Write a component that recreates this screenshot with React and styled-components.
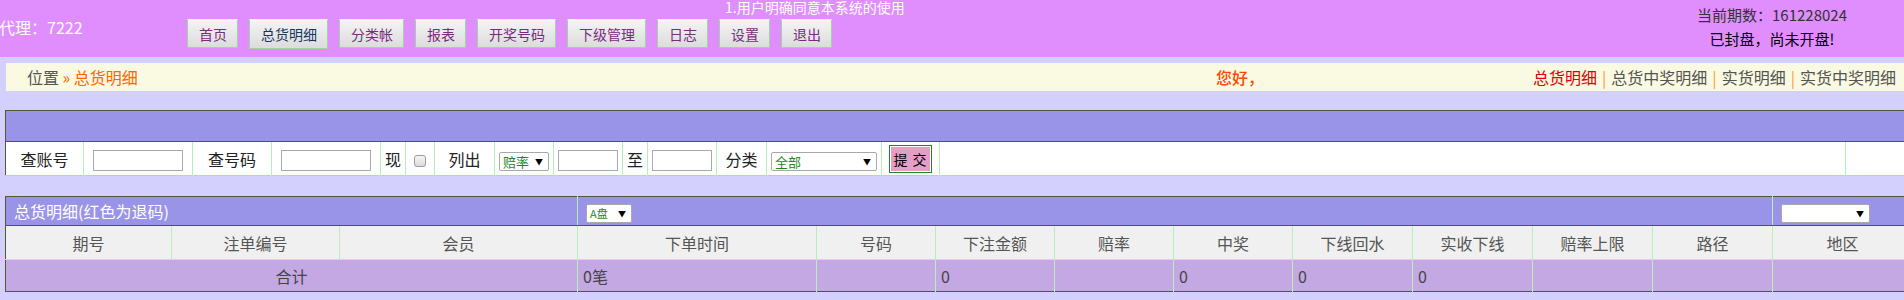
import React from 'react'
import styled, { createGlobalStyle } from 'styled-components'

const GlobalStyle = createGlobalStyle`
  body {
    margin: 0;
    background: #d4d0fe;
    font-family: "Noto Sans CJK SC", "Noto Sans", sans-serif;
    overflow: hidden;
  }
`

const navItems = ['首页', '总货明细', '分类帐', '报表', '开奖号码', '下级管理', '日志', '设置', '退出']
const tabs = ['总货明细', '总货中奖明细', '实货明细', '实货中奖明细']
const columns = [
  { title: '期号', w: 166 },
  { title: '注单编号', w: 168 },
  { title: '会员', w: 238 },
  { title: '下单时间', w: 239 },
  { title: '号码', w: 119 },
  { title: '下注金额', w: 119 },
  { title: '赔率', w: 119 },
  { title: '中奖', w: 119 },
  { title: '下线回水', w: 120 },
  { title: '实收下线', w: 120 },
  { title: '赔率上限', w: 120 },
  { title: '路径', w: 120 },
  { title: '地区', w: 140 },
]
const filterCols = [78, 109, 79, 109, 25, 29, 60, 59, 69, 25, 69, 50, 115, 58, 906, 67]
const sum = (list) => list.reduce((a, b) => a + b, 0)

const App = () => {
  return (
    <>
      <GlobalStyle />
      <Header>
        <Agent>代理：7222</Agent>
        <Middle>
          <Marquee>1.用户明确同意本系统的使用</Marquee>
          <Nav>
            {navItems.map((item) => (
              <NavButton key={item} $active={item === '总货明细'}>{item}</NavButton>
            ))}
          </Nav>
        </Middle>
        <Status>
          <div>当前期数：161228024</div>
          <div className="closed">已封盘，尚未开盘!</div>
        </Status>
      </Header>

      <Page>
        <Crumbs>
          <div>
            <span>位置</span> <Orange>» 总货明细</Orange>
          </div>
          <Greeting>您好，</Greeting>
          <Tabs>
            {tabs.map((t, i) => (
              <React.Fragment key={t}>
                {i > 0 && <Sep>|</Sep>}
                <Tab $active={i === 0}>{t}</Tab>
              </React.Fragment>
            ))}
          </Tabs>
        </Crumbs>

        <FilterTable $w={sum(filterCols)}>
          <colgroup>
            {filterCols.map((w, i) => <col key={i} style={{ width: w }} />)}
          </colgroup>
          <tbody>
            <tr>
              <BarCell colSpan={16} />
            </tr>
            <FilterRow>
              <td>查账号</td>
              <td><TextBox $w={90} /></td>
              <td>查号码</td>
              <td><TextBox $w={90} /></td>
              <td>现</td>
              <td><Check type="checkbox" /></td>
              <td>列出</td>
              <td><SelectBox $w={50}>赔率<Arrow>▼</Arrow></SelectBox></td>
              <td><TextBox $w={60} /></td>
              <td>至</td>
              <td><TextBox $w={60} /></td>
              <td>分类</td>
              <td><SelectBox $w={106}>全部<Arrow>▼</Arrow></SelectBox></td>
              <td><Submit>提 交</Submit></td>
              <td />
              <td />
            </FilterRow>
          </tbody>
        </FilterTable>

        <ListTable $w={sum(columns.map((c) => c.w))}>
          <colgroup>
            {columns.map((c) => <col key={c.title} style={{ width: c.w }} />)}
          </colgroup>
          <tbody>
            <TitleRow>
              <td colSpan={3}>总货明细(红色为退码)</td>
              <td colSpan={9}><SelectBox $w={46} $small>A盘<Arrow>▼</Arrow></SelectBox></td>
              <td><SelectBox $w={89}><span /><Arrow>▼</Arrow></SelectBox></td>
            </TitleRow>
            <HeadRow>
              {columns.map((c) => <th key={c.title}>{c.title}</th>)}
            </HeadRow>
            <SumRow>
              <SumLabel colSpan={3}>合计</SumLabel>
              <td>0笔</td>
              <td />
              <td>0</td>
              <td />
              <td>0</td>
              <td>0</td>
              <td>0</td>
              <td />
              <td />
              <td />
            </SumRow>
          </tbody>
        </ListTable>
      </Page>
    </>
  )
}

const Header = styled.header`
  display: flex;
  height: 57px;
  background: #e08efe;
`
const Agent = styled.div`
  width: 188px;
  flex-shrink: 0;
  margin-left: -1px;
  padding-top: 15px;
  color: #fff;
  font-size: 16px;
  white-space: nowrap;
`
const Middle = styled.div`
  display: flex;
  flex-direction: column;
`
const Marquee = styled.div`
  height: 16px;
  padding-left: 538px;
  white-space: nowrap;
  color: #fff;
  font-size: 14px;
  line-height: 14px;
`
const Nav = styled.nav`
  display: flex;
  align-items: flex-start;
  gap: 11px;
  margin-top: 3px;
`
const NavButton = styled.button`
  height: ${(p) => (p.$active ? 30 : 29)}px;
  padding: 0 10px 0 11px;
  border: 1px solid #9fd49f;
  border-top-color: #e8f4e8;
  background: linear-gradient(#f4f4f4, #dcdcdc);
  color: ${(p) => (p.$active ? '#14365e' : '#7a2b7e')};
  font-family: inherit;
  font-size: 14px;
  cursor: pointer;
`
const Status = styled.div`
  margin-left: auto;
  width: 200px;
  margin-right: 32px;
  padding-top: 3px;
  text-align: center;
  color: #333;
  font-size: 15px;
  line-height: 24px;

  .closed {
    color: #000;
  }
`

const Page = styled.div`
  padding-left: 5px;
`
const Crumbs = styled.div`
  display: grid;
  grid-template-columns: 920px 1fr auto;
  align-items: center;
  height: 28px;
  margin-top: 6px;
  margin-left: 1px;
  padding: 0 8px 0 21px;
  background: #fafae2;
  color: #555;
  font-size: 16px;
`
const Orange = styled.span`
  color: #ff6600;
`
const Greeting = styled.div`
  text-align: center;
  color: #ff4800;
  font-weight: 500;
`
const Tabs = styled.div`
  display: flex;
  gap: 5px;
`
const Tab = styled.span`
  color: ${(p) => (p.$active ? '#dd0000' : '#555')};
`
const Sep = styled.span`
  color: #ff9a40;
`

const FilterTable = styled.table`
  margin-top: 19px;
  width: ${(p) => p.$w}px;
  table-layout: fixed;
  border-collapse: collapse;
  border-top: 1px solid #4f5a35;
  border-left: 1px solid #4f5a35;
  border-bottom: 1px solid #9de49d;
`
const BarCell = styled.td`
  height: 30px;
  padding: 0;
  background: #9a94e8;
  border-bottom: 1px solid #4f5a35;
`
const FilterRow = styled.tr`
  td {
    height: 33px;
    padding: 0;
    background: #fff;
    border-right: 1px solid #b8efb8;
    text-align: center;
    color: #222;
    font-size: 16px;
  }
`
const TextBox = styled.input`
  width: ${(p) => p.$w}px;
  height: 21px;
  box-sizing: border-box;
  border: 1px solid #a9a9a9;
  vertical-align: middle;
  margin: 0;
`
const Check = styled.input`
  appearance: none;
  width: 12px;
  height: 12px;
  margin: 0;
  border: 1px solid #9c9c9c;
  border-radius: 3px;
  background: linear-gradient(#f6f6f6, #dcdcdc);
  vertical-align: middle;
`
const SelectBox = styled.div`
  display: inline-flex;
  align-items: center;
  justify-content: space-between;
  width: ${(p) => p.$w}px;
  height: 19px;
  box-sizing: border-box;
  padding: 0 5px 0 3px;
  border: 1px solid #a9a9a9;
  border-radius: 2px;
  background: #fff;
  color: #1e8a1e;
  font-size: ${(p) => (p.$small ? 11 : 13)}px;
  line-height: 17px;
  vertical-align: middle;
  text-align: left;
`
const Arrow = styled.span`
  color: #000;
  font-size: 8px;
`
const Submit = styled.button`
  width: 43px;
  height: 28px;
  padding: 0;
  border: 1px solid #1f861f;
  box-shadow: inset 0 0 0 1px #fff;
  background: #e49ec8;
  color: #000;
  font-family: inherit;
  font-size: 14px;
  letter-spacing: 1px;
  vertical-align: middle;
`

const ListTable = styled.table`
  margin-top: 20px;
  width: ${(p) => p.$w}px;
  table-layout: fixed;
  border-collapse: collapse;
  border-top: 1px solid #4f5a35;
  border-left: 1px solid #4f5a35;
  border-bottom: 1px solid #4f5a35;
  font-size: 16px;

  td, th {
    padding: 0;
  }
`
const TitleRow = styled.tr`
  td {
    height: 28px;
    padding-left: 8px;
    background: #9a94e8;
    border-right: 1px solid #b8efb8;
    border-bottom: 1px solid #4f5a35;
    color: #fff;
  }
`
const HeadRow = styled.tr`
  th {
    height: 33px;
    background: #f0f0f0;
    border-right: 1px solid #b8efb8;
    border-bottom: 1px solid #b8efb8;
    color: #555;
    font-weight: normal;
    text-align: center;
  }
`
const SumRow = styled.tr`
  td {
    height: 31px;
    padding-left: 5px;
    background: #c4a8e4;
    border-right: 1px solid #b8efb8;
    color: #444;
    text-align: left;
  }
`
const SumLabel = styled.td`
  && {
    text-align: center;
    padding-left: 0;
  }
`

export default App
